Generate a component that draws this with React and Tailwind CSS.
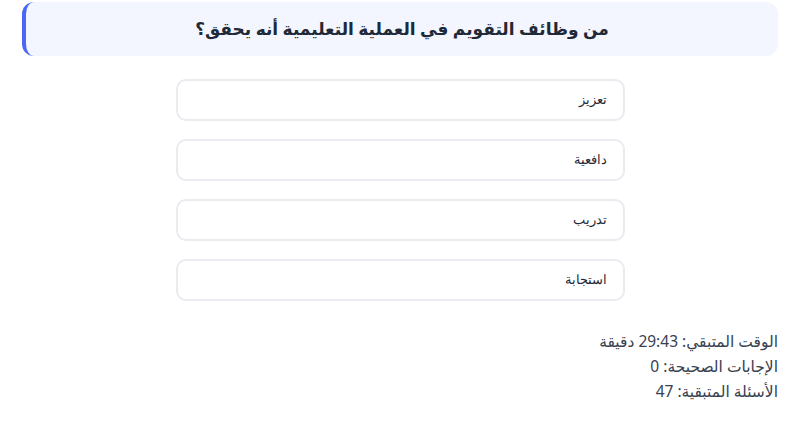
const options = ['تعزيز', 'دافعية', 'تدريب', 'استجابة']

export default function App() {
  return (
    <div dir="rtl" className="min-h-screen bg-white px-[22px] pt-[2px]" style={{ fontFamily: '"Noto Sans", "DejaVu Sans", sans-serif' }}>
      <div className="h-[54px] rounded-xl border-l-4 border-[#4a67f5] bg-[#f3f6fe] flex items-center justify-center">
        <h2 className="text-[17px] font-bold text-[#1f2937]">من وظائف التقويم في العملية التعليمية أنه يحقق؟</h2>
      </div>

      <div className="mt-[23px] w-[449px] mx-auto flex flex-col gap-[18px]">
        {options.map((opt) => (
          <button
            key={opt}
            className="h-[42px] rounded-[10px] border-2 border-[#e9ebf0] bg-white px-4 text-right text-[13px] text-[#1f2937]"
            style={{ fontFamily: '"Liberation Sans", Arial, sans-serif' }}
          >
            {opt}
          </button>
        ))}
      </div>

      <div className="mt-[28px] text-[15.5px] leading-[25px] text-[#374151]">
        <p>الوقت المتبقي: 29:43 دقيقة</p>
        <p>الإجابات الصحيحة: 0</p>
        <p>الأسئلة المتبقية: 47</p>
      </div>
    </div>
  )
}
